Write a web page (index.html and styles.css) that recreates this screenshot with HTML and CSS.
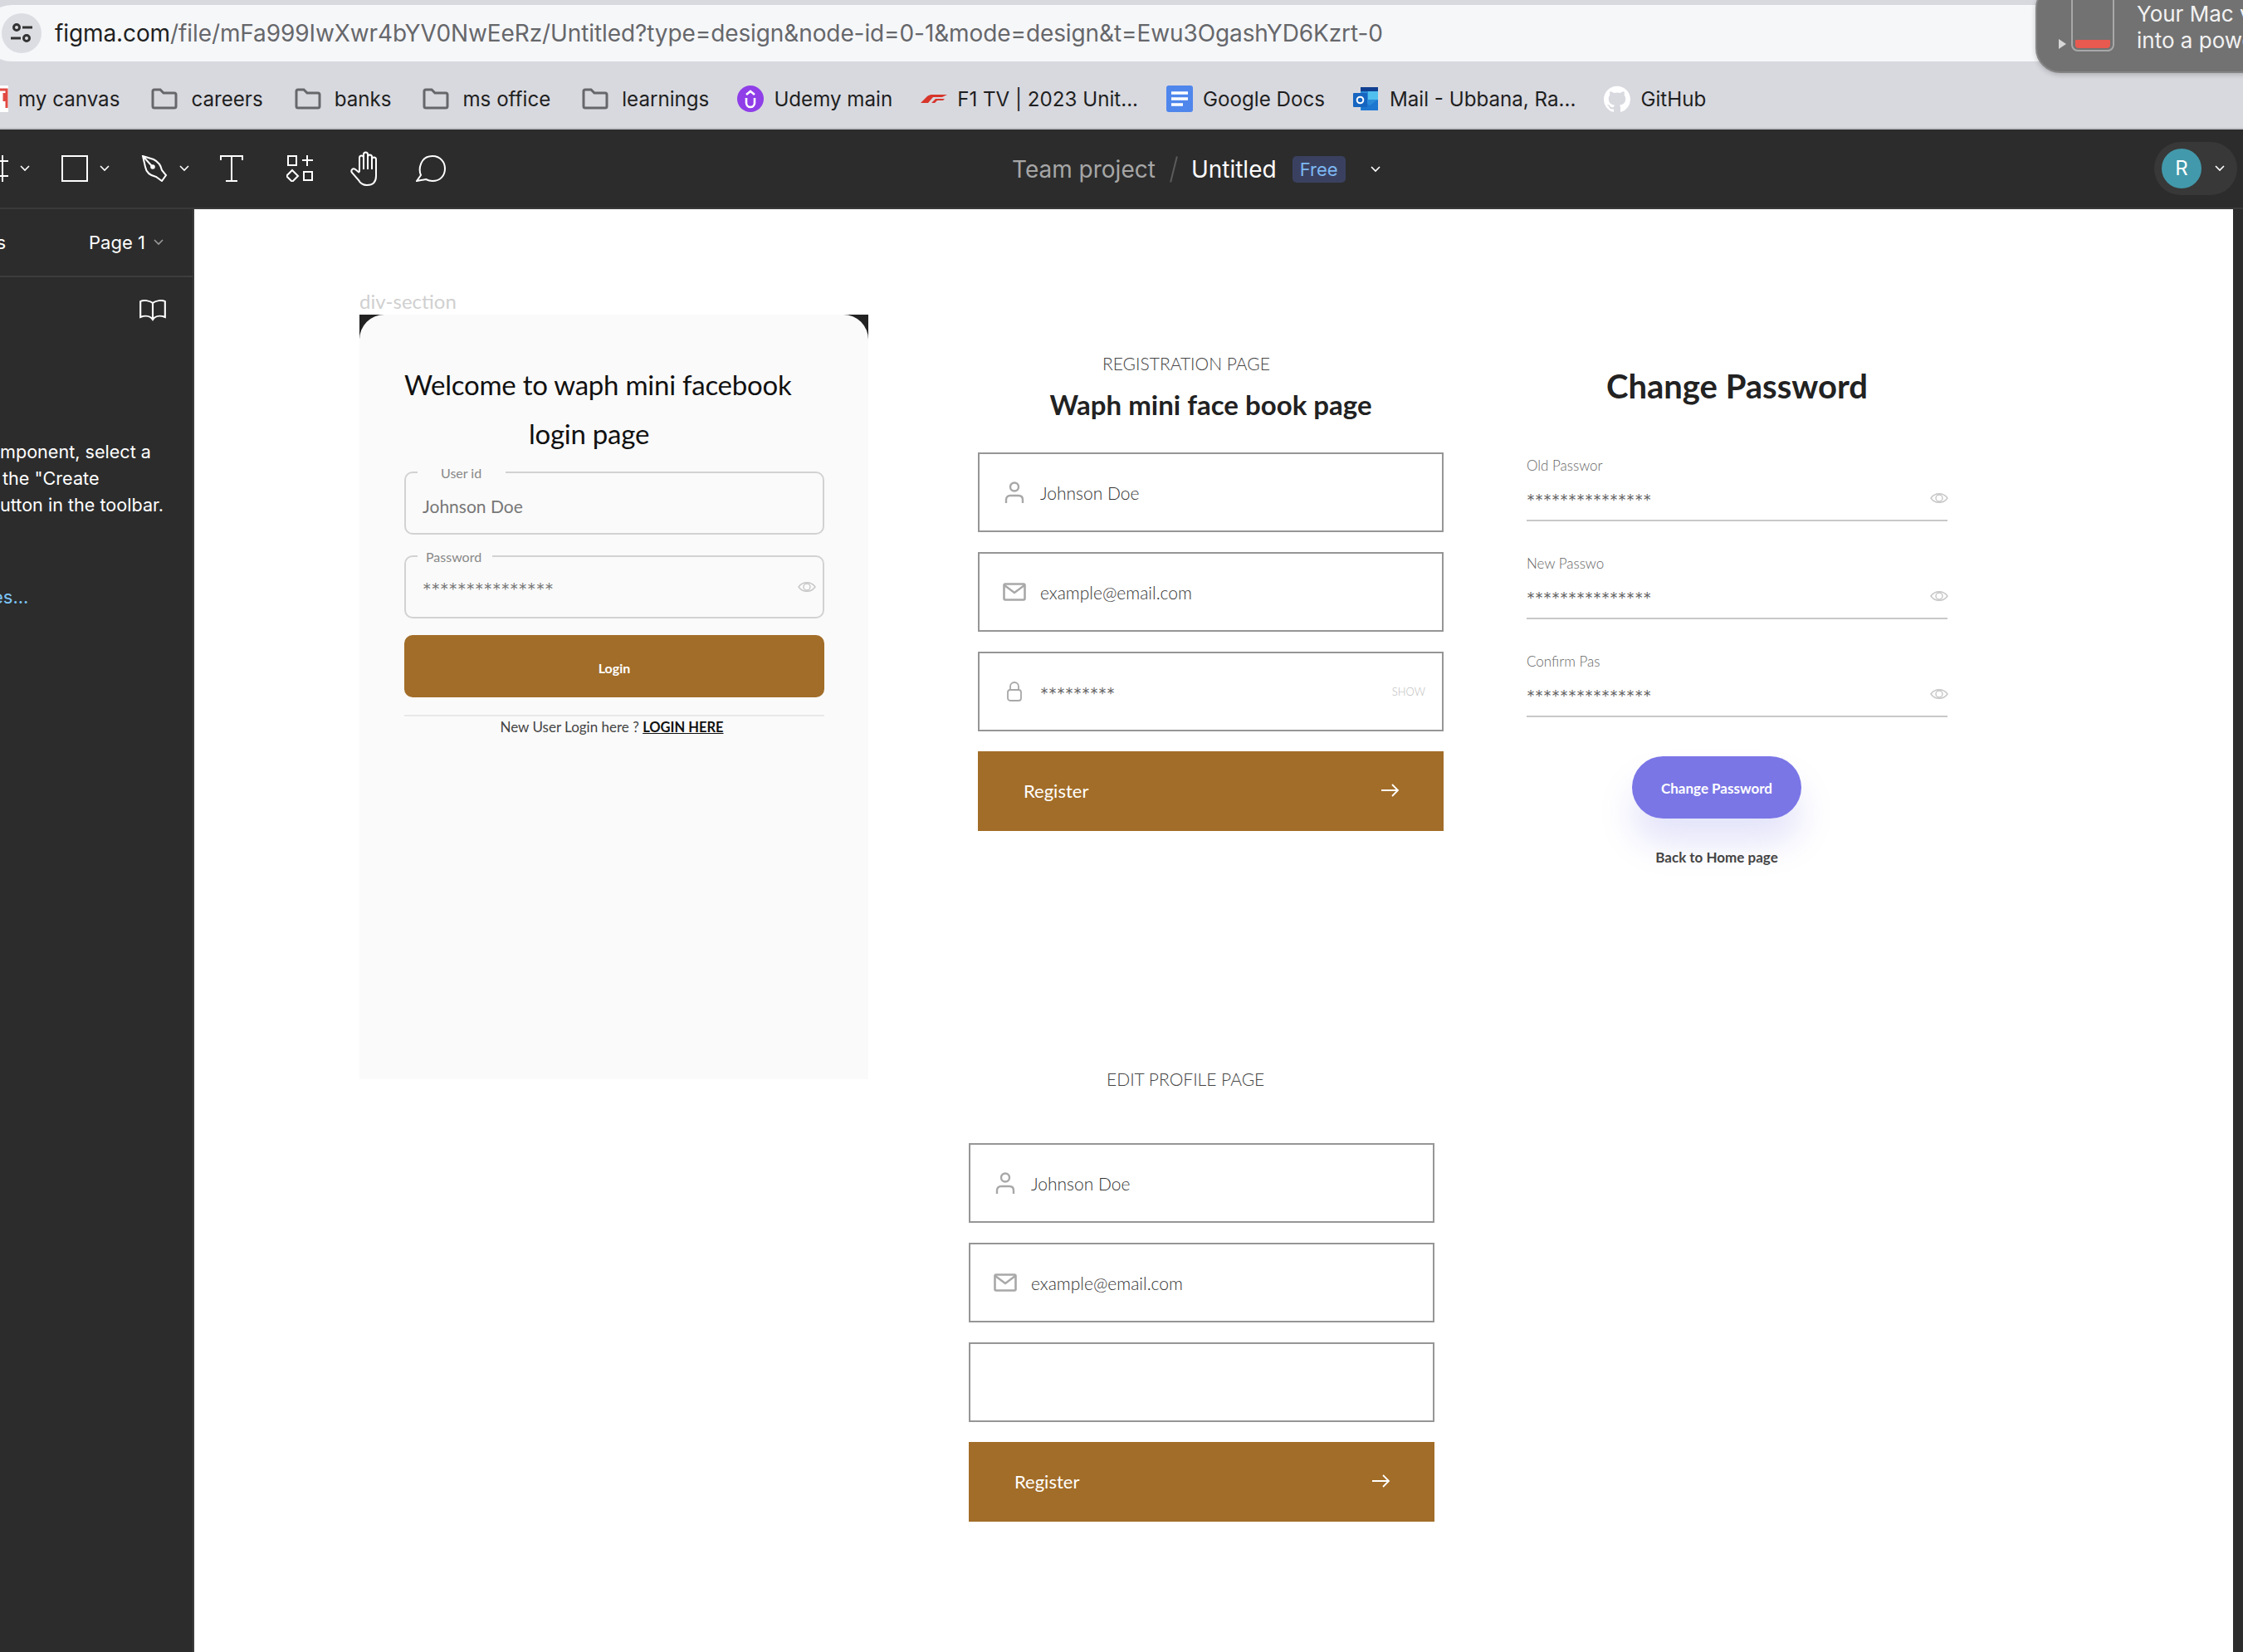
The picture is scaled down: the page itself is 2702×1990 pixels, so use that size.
FILE: index.html
```html
<!DOCTYPE html>
<html lang="en">
<head>
    <meta charset="UTF-8">
    <title>Untitled - Figma</title>
    <link rel="stylesheet" href="styles.css">
</head>
<body>
<svg class="sprites" width="0" height="0">
    <symbol id="folder" viewBox="0 0 32 26"><path d="M2 4a2 2 0 0 1 2-2h7l4 4h13a2 2 0 0 1 2 2v14a2 2 0 0 1-2 2H4a2 2 0 0 1-2-2z" fill="none" stroke="#66676b" stroke-width="3"/></symbol>
    <symbol id="chevron" viewBox="0 0 12 8"><path d="M1 1l5 5 5-5" fill="none" stroke="currentColor" stroke-width="1.6"/></symbol>
    <symbol id="eye" viewBox="0 0 22 16"><path d="M1 8C6 1 16 1 21 8 16 15 6 15 1 8z" fill="none" stroke="#c6c6c6" stroke-width="1.4"/><circle cx="11" cy="8" r="4" fill="none" stroke="#c6c6c6" stroke-width="1.4"/></symbol>
    <symbol id="user" viewBox="0 0 24 26"><circle cx="12" cy="6.5" r="5" fill="none" stroke="#a8a8a8" stroke-width="2.4"/><path d="M2 26v-4c0-3 2-5 5-5h10c3 0 5 2 5 5v4" fill="none" stroke="#a8a8a8" stroke-width="2.4"/></symbol>
    <symbol id="mail" viewBox="0 0 28 22"><rect x="1.5" y="1.5" width="25" height="19" rx="1.5" fill="none" stroke="#a8a8a8" stroke-width="2.6"/><path d="M2 3l12 9 12-9" fill="none" stroke="#a8a8a8" stroke-width="2.4"/></symbol>
    <symbol id="lock" viewBox="0 0 18 24"><rect x="1" y="10" width="16" height="13" rx="3" fill="none" stroke="#a8a8a8" stroke-width="1.8"/><path d="M4 10V6a5 5 0 0 1 10 0v4" fill="none" stroke="#a8a8a8" stroke-width="1.8"/></symbol>
    <symbol id="arrow" viewBox="0 0 22 16"><path d="M0 8h20M13 1l7 7-7 7" fill="none" stroke="#fff" stroke-width="1.8"/></symbol>
</svg>

<header class="browser">
    <div class="address">
        <span class="site-btn">
            <svg width="28" height="28" viewBox="0 0 28 28" fill="none" stroke="#333" stroke-width="3"><circle cx="8" cy="7" r="3.5"/><path d="M15 7h12M1 20h12"/><circle cx="20" cy="20" r="3.5"/></svg>
        </span>
        <span class="url"><b>figma.com</b>/file/mFa999IwXwr4bYV0NwEeRz/Untitled?type=design&amp;node-id=0-1&amp;mode=design&amp;t=Ewu3OgashYD6Kzrt-0</span>
    </div>
    <nav class="bookmarks">
        <a class="mark"><svg width="10" height="32" viewBox="0 0 10 32"><rect width="10" height="32" fill="#fff"/><path d="M0 5h8v22M5 9v10" fill="none" stroke="#e04a42" stroke-width="3"/></svg>my canvas</a>
        <a class="mark"><svg class="folder" width="32" height="26"><use href="#folder"/></svg>careers</a>
        <a class="mark"><svg class="folder" width="32" height="26"><use href="#folder"/></svg>banks</a>
        <a class="mark"><svg class="folder" width="32" height="26"><use href="#folder"/></svg>ms office</a>
        <a class="mark"><svg class="folder" width="32" height="26"><use href="#folder"/></svg>learnings</a>
        <a class="mark"><svg width="32" height="32" viewBox="0 0 32 32"><circle cx="16" cy="16" r="16" fill="#8f3ee8"/><path d="M11 15v6a5 5 0 0 0 10 0v-6M11 11l5-4 5 4" fill="none" stroke="#fff" stroke-width="2.6"/></svg>Udemy main</a>
        <a class="mark"><svg width="32" height="32" viewBox="0 0 32 32"><path d="M0 21l8-8c2-1.500 4-2 6-2h18l-6 3H15l-6 7zM13 21l5-5h11l-2 2h-7l-3 3z" fill="#d8352b"/></svg>F1 TV | 2023 Unit...</a>
        <a class="mark"><svg width="32" height="32" viewBox="0 0 32 32"><rect width="32" height="32" rx="3" fill="#4f86ec"/><path d="M6 9h20M6 16h20M6 23h14" stroke="#fff" stroke-width="3.400"/></svg>Google Docs</a>
        <a class="mark"><svg width="32" height="32" viewBox="0 0 32 32"><rect x="9" y="2" width="21" height="28" fill="#2a8ad8"/><rect x="9" y="2" width="21" height="5" fill="#103f91"/><path d="M18 7h12v10H18z" fill="#50c0ee"/><path d="M10 17l10 7 10-7v13H10z" fill="#1d76cf"/><rect y="9" width="17" height="17" rx="1" fill="#1665c0"/><circle cx="8.500" cy="17.500" r="3.800" fill="none" stroke="#fff" stroke-width="2"/></svg>Mail - Ubbana, Ra...</a>
        <a class="mark"><svg width="32" height="32" viewBox="0 0 24 24"><path fill="#fff" d="M12 .5C5.370.5 0 5.870 0 12.500c0 5.300 3.440 9.800 8.200 11.390.6.110.82-.26.82-.58 0-.28-.01-1.040-.02-2.050-3.340.73-4.040-1.610-4.040-1.610-.55-1.390-1.330-1.760-1.330-1.760-1.090-.74.08-.73.08-.73 1.200.09 1.840 1.240 1.840 1.240 1.070 1.830 2.810 1.300 3.490 1 .11-.78.42-1.300.76-1.600-2.670-.3-5.470-1.330-5.470-5.930 0-1.310.47-2.380 1.240-3.220-.12-.3-.54-1.520.12-3.180 0 0 1.010-.32 3.300 1.230a11.500 11.500 0 0 1 6 0c2.290-1.550 3.300-1.230 3.300-1.230.66 1.660.24 2.880.12 3.180.77.84 1.240 1.910 1.240 3.220 0 4.610-2.810 5.630-5.480 5.920.43.37.81 1.100.81 2.220 0 1.600-.01 2.900-.01 3.290 0 .32.21.7.82.58A12 12 0 0 0 24 12.500C24 5.870 18.630.5 12 .5z"/></svg>GitHub</a>
    </nav>
    <div class="battery-note">
        <span class="note-arrow"></span>
        <span class="note-battery"><i></i></span>
        <p>Your Mac v<br>into a powe</p>
    </div>
</header>

<div class="toolbar">
    <div class="tools">
        <span class="tool tool-frame">
            <svg width="32" height="32" viewBox="0 0 32 32" fill="none" stroke="#fff" stroke-width="2"><path d="M0 7h32M0 25h32M7 0v32M25 0v32"/></svg>
            <svg class="chev" width="12" height="8"><use href="#chevron"/></svg>
        </span>
        <span class="tool">
            <svg width="32" height="32" viewBox="0 0 32 32" fill="none" stroke="#fff" stroke-width="2"><rect x="1" y="1" width="30" height="30"/></svg>
            <svg class="chev" width="12" height="8"><use href="#chevron"/></svg>
        </span>
        <span class="tool">
            <svg width="32" height="32" viewBox="0 0 32 32" fill="none" stroke="#fff" stroke-width="2"><path d="M2 1l13 4c6 3 9 8 10 13l5 6-5 7-7-5C9 24 6 20 5 14zM2 1l11 12"/><circle cx="14" cy="14" r="1.800" fill="#fff"/></svg>
            <svg class="chev" width="12" height="8"><use href="#chevron"/></svg>
        </span>
        <span class="tool tool-text">
            <svg width="32" height="32" viewBox="0 0 32 32" fill="none" stroke="#fff" stroke-width="2"><path d="M3 6V1h26v5M16 1v30M9 31h14"/></svg>
        </span>
        <span class="tool tool-comps">
            <svg width="32" height="32" viewBox="0 0 32 32" fill="none" stroke="#fff" stroke-width="2"><rect x="2" y="1" width="10" height="11"/><path d="M19 6h13M25 0v13M7 18l7 7-7 7-7-7z"/><rect x="21" y="20" width="10" height="10"/></svg>
        </span>
        <span class="tool tool-hand">
            <svg width="38" height="42" viewBox="0 0 38 42" fill="none" stroke="#fff" stroke-width="2"><path d="M12 25V8a2.500 2.500 0 0 1 5 0V4a2.500 2.500 0 0 1 5 0v3a2.500 2.500 0 0 1 5 0v3a2.500 2.500 0 0 1 5 0v20c0 7-4 11-11 11-5 0-8-2-10-6l-8-9c-2-3 1-6 4-4l5 4M17 8v14M22 4v18M27 7v15"/></svg>
        </span>
        <span class="tool tool-comment">
            <svg width="36" height="32" viewBox="0 0 36 32" fill="none" stroke="#fff" stroke-width="2"><path d="M1 31l5-7C3 17 5 1 20 1c10 0 15 8 15 15 0 9-6 15-15 15-3 0-6-1-8-2z"/></svg>
        </span>
    </div>
    <div class="doc-title">
        <span class="team">Team project</span>
        <span class="slash"></span>
        <span class="doc-name">Untitled</span>
        <span class="badge">Free</span>
        <svg class="doc-chev" width="12" height="8"><use href="#chevron"/></svg>
    </div>
    <div class="user-pill">
        <span class="avatar">R</span>
        <svg class="chev" width="12" height="8"><use href="#chevron"/></svg>
    </div>
</div>

<div class="workspace">
    <aside class="panel">
        <div class="panel-tabs">
            <span class="tab-cut">s</span>
            <span class="page-name">Page 1</span>
            <svg class="page-chev" width="12" height="8"><use href="#chevron"/></svg>
        </div>
        <div class="book-row">
            <svg width="36" height="26" viewBox="0 0 34 26" preserveAspectRatio="none" fill="none" stroke="#fff" stroke-width="2"><path d="M17 4C14 1 6 0 3 2v19c5-2 11-2 14 3 3-5 9-5 14-3V2c-3-2-11-1-14 2zM17 4v20"/></svg>
        </div>
        <p class="panel-text">mponent, select a<br><span class="shift">the "Create</span><br>utton in the toolbar.</p>
        <p class="panel-link">es...</p>
    </aside>

    <main class="canvas">
        <section class="frame login-frame">
            <span class="frame-label">div-section</span>
            <div class="login-card">
                <h1 class="login-title">Welcome to waph mini facebook<br><span class="login-title-2">login page</span></h1>
                <div class="outline-field">
                    <span class="legend legend-user">User id</span>
                    <span class="outline-value">Johnson Doe</span>
                </div>
                <div class="outline-field">
                    <span class="legend legend-pass">Password</span>
                    <span class="outline-value stars">***************</span>
                    <svg class="outline-eye" width="22" height="16"><use href="#eye"/></svg>
                </div>
                <div class="login-btn">Login</div>
                <p class="login-note">New User Login here ? <a>LOGIN HERE</a></p>
            </div>
        </section>

        <section class="frame reg-frame">
            <p class="page-label">REGISTRATION PAGE</p>
            <h2 class="reg-title">Waph mini face book page</h2>
            <div class="box-list">
                <div class="box-field"><svg class="box-icon" width="28" height="26"><use href="#user"/></svg>Johnson Doe</div>
                <div class="box-field"><svg class="box-icon" width="28" height="22"><use href="#mail"/></svg>example@email.com</div>
                <div class="box-field"><svg class="box-icon" width="28" height="24"><use href="#lock"/></svg><span class="stars">*********</span><span class="show">SHOW</span></div>
                <div class="box-btn">Register<svg width="22" height="16"><use href="#arrow"/></svg></div>
            </div>
        </section>

        <section class="frame pass-frame">
            <h2 class="pass-title">Change Password</h2>
            <div class="line-field">
                <label>Old Passwor</label>
                <div class="line-value"><span class="stars">***************</span><svg width="22" height="16"><use href="#eye"/></svg></div>
            </div>
            <div class="line-field">
                <label>New Passwo</label>
                <div class="line-value"><span class="stars">***************</span><svg width="22" height="16"><use href="#eye"/></svg></div>
            </div>
            <div class="line-field">
                <label>Confirm Pas</label>
                <div class="line-value"><span class="stars">***************</span><svg width="22" height="16"><use href="#eye"/></svg></div>
            </div>
            <div class="pass-actions">
                <div class="pill-btn">Change Password</div>
                <a class="back-link">Back to Home page</a>
            </div>
        </section>

        <section class="frame edit-frame">
            <p class="page-label">EDIT PROFILE PAGE</p>
            <div class="box-list">
                <div class="box-field"><svg class="box-icon" width="28" height="26"><use href="#user"/></svg>Johnson Doe</div>
                <div class="box-field"><svg class="box-icon" width="28" height="22"><use href="#mail"/></svg>example@email.com</div>
                <div class="box-field"></div>
                <div class="box-btn">Register<svg width="22" height="16"><use href="#arrow"/></svg></div>
            </div>
        </section>
    </main>
    <div class="right-strip"></div>
</div>
</body>
</html>
```

FILE: styles.css
```css
* {
    box-sizing: border-box;
}
html, body {
    margin: 0;
    height: 100%;
}
body {
    width: 2702px;
    height: 1990px;
    overflow: hidden;
    display: flex;
    flex-direction: column;
    background-color: #2c2c2c;
    font-family: Inter, "Liberation Sans", sans-serif;
}
p, h1, h2 {
    margin: 0;
    font-weight: 400;
}
svg {
    display: block;
    flex: none;
}
.sprites {
    position: absolute;
}

/* browser chrome */
.browser {
    position: relative;
    height: 156px;
    padding-top: 6px;
    background-color: #d8d9df;
    border-bottom: 2px solid #bfc0c5;
    overflow: hidden;
}
.address {
    display: flex;
    align-items: center;
    height: 68px;
    margin-left: -20px;
    padding-left: 22px;
    background-color: #f6f7f9;
    border-radius: 34px;
}
.site-btn {
    display: flex;
    align-items: center;
    justify-content: center;
    width: 48px;
    height: 48px;
    border-radius: 50%;
    background-color: #dcdde2;
}
.url {
    margin-left: 16px;
    font-size: 28px;
    letter-spacing: -.1px;
    color: #66676b;
}
.url b {
    font-weight: 400;
    color: #1f1f1f;
}
.bookmarks {
    display: flex;
    align-items: center;
    gap: 34px;
    height: 78px;
    padding-top: 12px;
}
.mark {
    display: flex;
    align-items: center;
    gap: 12px;
    font-size: 24.15px;
    color: #1f1f1f;
}
.folder {
    margin: 0 4px;
}
.battery-note {
    position: absolute;
    left: 2452px;
    top: -20px;
    width: 300px;
    height: 108px;
    border: 2px solid #858585;
    border-radius: 30px;
    background-color: #727272;
    box-shadow: 0 2px 6px rgba(0, 0, 0, .2);
    overflow: hidden;
}
.note-arrow {
    position: absolute;
    left: 26px;
    top: 65px;
    border-left: 9px solid #d6d6d6;
    border-top: 6px solid transparent;
    border-bottom: 6px solid transparent;
}
.note-battery {
    position: absolute;
    left: 41px;
    top: -10px;
    width: 52px;
    height: 90px;
    border: 2px solid #a8a8a8;
    border-radius: 8px;
}
.note-battery i {
    position: absolute;
    left: 3px;
    right: 3px;
    bottom: 2px;
    height: 10px;
    background-color: #e85a4f;
    border-radius: 1px 1px 4px 4px;
}
.battery-note p {
    position: absolute;
    left: 120px;
    top: 19px;
    white-space: nowrap;
    font-size: 26px;
    line-height: 32px;
    color: #f2f2f2;
}

/* figma toolbar */
.toolbar {
    display: flex;
    align-items: center;
    height: 94px;
    background-color: #2c2c2c;
    color: #fff;
}
.tools {
    display: flex;
    align-items: center;
    margin-left: -22px;
}
.tool {
    display: flex;
    align-items: center;
    gap: 14px;
    margin-right: 38px;
}
.tool-text {
    margin-right: 50px;
    margin-left: -3px;
}
.tool-comps {
    margin-right: 44px;
}
.tool-hand {
    margin-right: 42px;
}
.tool-comment {
    margin-right: 0;
}
.doc-title {
    display: flex;
    align-items: center;
    margin-left: 682px;
    padding-top: 2px;
    font-size: 28px;
}
.team {
    color: #a6a6a6;
}
.slash {
    width: 2px;
    height: 32px;
    margin: 0 20px 0 21px;
    background-color: #5c5c5c;
    transform: rotate(14deg);
}
.doc-name {
    color: #fff;
}
.badge {
    margin-left: 19px;
    padding: 0 9px;
    height: 32px;
    line-height: 32px;
    border-radius: 5px;
    background-color: #3a4160;
    color: #7db8f3;
    font-size: 22px;
}
.doc-chev {
    margin-left: 30px;
}
.user-pill {
    display: flex;
    align-items: center;
    gap: 16px;
    width: 100px;
    height: 64px;
    margin-left: auto;
    margin-right: 7px;
    padding-left: 9px;
    border-radius: 32px;
    background-color: #383838;
}
.avatar {
    width: 48px;
    height: 48px;
    line-height: 48px;
    text-align: center;
    border-radius: 50%;
    background-color: #4299ab;
    font-size: 24px;
    color: #fff;
}

/* left panel */
.workspace {
    flex: 1;
    display: flex;
    min-height: 0;
    border-top: 2px solid #3a3a3a;
}
.panel {
    width: 234px;
    flex: none;
    background-color: #2c2c2c;
    border-right: 2px solid #3a3a3a;
    color: #fff;
    font-size: 22px;
}
.panel-tabs {
    display: flex;
    align-items: center;
    height: 82px;
    border-bottom: 2px solid #3d3d3d;
}
.tab-cut {
    width: 7px;
    overflow: hidden;
    direction: rtl;
}
.page-name {
    margin-left: 100px;
}
.page-chev {
    margin-left: 10px;
    color: #9a9a9a;
}
.book-row {
    display: flex;
    justify-content: flex-end;
    padding: 27px 30px 0 0;
}
.panel-text {
    margin-top: 141px;
    line-height: 32px;
    font-size: 21.6px;
    white-space: nowrap;
}
.shift {
    margin-left: 3px;
}
.panel-link {
    margin: 82px 0 0 -9px;
    color: #7cc4f8;
}

/* canvas with the drawn frames */
.canvas {
    position: relative;
    flex: 1;
    background-color: #fff;
    font-family: Lato, Inter, sans-serif;
}
.right-strip {
    width: 12px;
    flex: none;
    background-color: #2c2c2c;
}
.frame {
    position: absolute;
}
.stars {
    font-family: Inter, sans-serif;
    font-weight: 300;
    font-size: 20px;
    color: #666;
}
.login-frame {
    left: 199px;
    top: 127px;
    width: 613px;
    height: 921px;
    background: linear-gradient(#222 30px, #fafafa 30px);
}
.frame-label {
    position: absolute;
    left: 0;
    top: -29px;
    font-size: 24px;
    line-height: 26px;
    color: #d0d0d0;
}
.login-card {
    height: 100%;
    padding: 55px 53px 0 54px;
    background-color: #fafafa;
    border-radius: 30px 30px 0 0;
}
.login-title {
    font-size: 33px;
    letter-spacing: -.25px;
    line-height: 59px;
    color: #111;
    white-space: nowrap;
}
.login-title-2 {
    margin-left: 150px;
}
.outline-field {
    position: relative;
    display: flex;
    align-items: flex-start;
    height: 76px;
    margin-top: 16px;
    padding: 28px 20px 0;
    border: 2px solid #d2d2d2;
    border-radius: 10px;
}
.outline-field + .outline-field {
    margin-top: 25px;
}
.outline-value {
    font-size: 21px;
    line-height: 24px;
    color: #777;
}
.legend {
    position: absolute;
    top: -10px;
    height: 20px;
    line-height: 20px;
    font-size: 16px;
    color: #888;
    background-color: #fafafa;
}
.legend-user {
    left: 14px;
    width: 106px;
    padding-left: 28px;
}
.legend-pass {
    left: 14px;
    width: 90px;
    padding-left: 10px;
}
.outline-eye {
    position: absolute;
    right: 8px;
    top: 28px;
}
.login-btn {
    height: 75px;
    margin-top: 20px;
    line-height: 80px;
    text-align: center;
    border-radius: 10px;
    background-color: #a26d28;
    color: #fff;
    font-size: 16px;
    font-weight: 700;
}
.login-note {
    margin-top: 21px;
    padding: 3px 6px 0 0;
    border-top: 2px solid #e9e9e9;
    text-align: center;
    font-size: 17px;
    line-height: 20px;
    color: #444;
}
.login-note a {
    color: #111;
    font-weight: 700;
    font-size: 16.5px;
    text-decoration: underline;
}
.reg-frame {
    left: 944px;
    top: 173px;
    width: 561px;
}
.page-label {
    margin-left: 150px;
    font-size: 21px;
    line-height: 26px;
    font-weight: 300;
    color: #444;
}
.reg-title {
    margin-top: 16px;
    font-size: 33px;
    line-height: 40px;
    font-weight: 700;
    text-align: center;
    color: #222;
}
.box-list {
    display: flex;
    flex-direction: column;
    gap: 24px;
    margin-top: 38px;
}
.box-field {
    display: flex;
    align-items: center;
    height: 96px;
    padding: 0 20px 0 28px;
    border: 2px solid #969696;
    font-size: 21px;
    font-weight: 300;
    color: #333;
}
.box-field .stars {
    padding-top: 5px;
}
.box-icon {
    margin-right: 17px;
}
.show {
    margin-left: auto;
    font-size: 13px;
    color: #bbb;
}
.box-btn {
    display: flex;
    align-items: center;
    justify-content: space-between;
    height: 96px;
    padding: 0 53px 2px 55px;
    background-color: #a26d28;
    font-size: 22px;
    color: #fff;
}
.pass-frame {
    left: 1605px;
    top: 188px;
    width: 507px;
}
.pass-title {
    font-size: 40px;
    line-height: 50px;
    font-weight: 700;
    text-align: center;
    color: #222;
}
.line-field {
    margin-top: 41px;
    border-bottom: 2px solid #c8c8c8;
}
.pass-title + .line-field {
    margin-top: 61px;
}
.line-field label {
    display: block;
    font-size: 17px;
    font-weight: 300;
    line-height: 20px;
    color: #666;
}
.line-value {
    display: flex;
    align-items: center;
    justify-content: space-between;
    height: 24px;
    margin: 17px -1px 14px 0;
}
.line-value .stars {
    padding-top: 5px;
}
.pass-actions {
    display: flex;
    flex-direction: column;
    align-items: center;
    width: 204px;
    margin: 47px 0 0 127px;
}
.pill-btn {
    width: 204px;
    height: 75px;
    line-height: 78px;
    text-align: center;
    border-radius: 38px;
    background-color: #7a76e6;
    box-shadow: 0 30px 40px rgba(122, 118, 230, .2);
    color: #fff;
    font-size: 17px;
    font-weight: 700;
}
.back-link {
    margin-top: 37px;
    font-size: 17px;
    line-height: 20px;
    font-weight: 700;
    color: #444;
    white-space: nowrap;
}
.edit-frame {
    left: 933px;
    top: 1035px;
    width: 561px;
}
.edit-frame .page-label {
    margin-left: 166px;
}
.edit-frame .box-list {
    margin-top: 64px;
}
```
